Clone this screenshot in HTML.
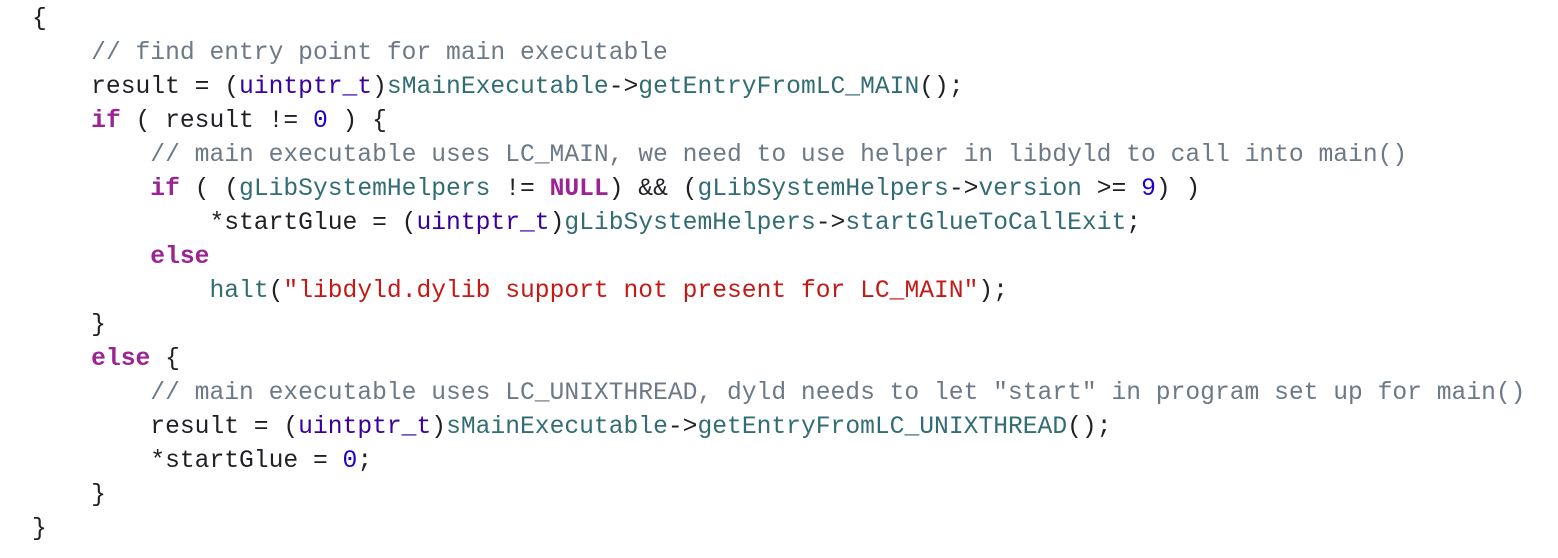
<!DOCTYPE html>
<html><head><style>
body{margin:0;background:#fff;width:1558px;height:558px;overflow:hidden}
pre{margin:0;padding:2px 0 0 32px;font-family:"Liberation Mono",monospace;font-size:24.65px;line-height:34px;color:#1f1f24}
.c{color:#6c7986}.t{color:#3900a0}.m{color:#326d74}.k{color:#9b2393;font-weight:bold}.n{color:#1c00cf}.s{color:#c41a16}
</style></head><body><pre>{
    <span class="c">// find entry point for main executable</span>
    result = (<span class="t">uintptr_t</span>)<span class="m">sMainExecutable</span>-&gt;<span class="m">getEntryFromLC_MAIN</span>();
    <span class="k">if</span> ( result != <span class="n">0</span> ) {
        <span class="c">// main executable uses LC_MAIN, we need to use helper in libdyld to call into main()</span>
        <span class="k">if</span> ( (<span class="m">gLibSystemHelpers</span> != <span class="k">NULL</span>) &amp;&amp; (<span class="m">gLibSystemHelpers</span>-&gt;<span class="m">version</span> &gt;= <span class="n">9</span>) )
            *startGlue = (<span class="t">uintptr_t</span>)<span class="m">gLibSystemHelpers</span>-&gt;<span class="m">startGlueToCallExit</span>;
        <span class="k">else</span>
            <span class="m">halt</span>(<span class="s">"libdyld.dylib support not present for LC_MAIN"</span>);
    }
    <span class="k">else</span> {
        <span class="c">// main executable uses LC_UNIXTHREAD, dyld needs to let "start" in program set up for main()</span>
        result = (<span class="t">uintptr_t</span>)<span class="m">sMainExecutable</span>-&gt;<span class="m">getEntryFromLC_UNIXTHREAD</span>();
        *startGlue = <span class="n">0</span>;
    }
}</pre></body></html>
